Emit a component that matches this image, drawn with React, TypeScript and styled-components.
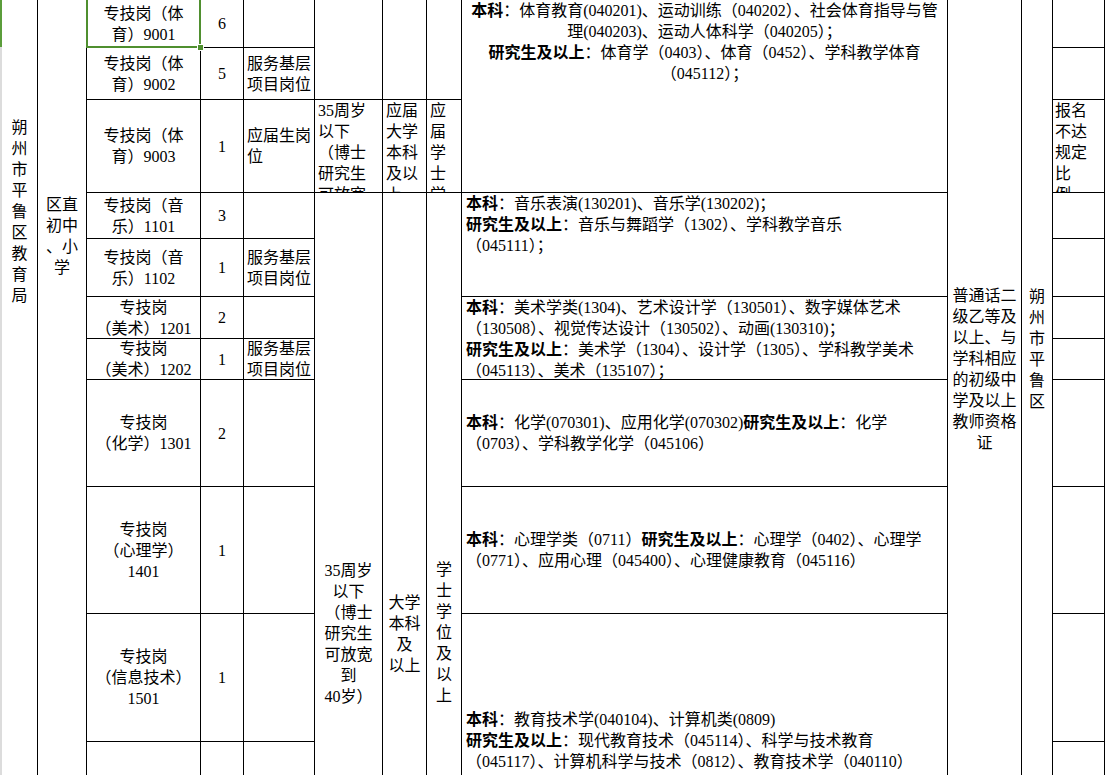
import styled, { createGlobalStyle } from "styled-components"

const GlobalStyle = createGlobalStyle`
  html, body {
    margin: 0;
    padding: 0;
    background: #fff;
    overflow: hidden;
  }
  body {
    font-family: "Liberation Serif", "Noto Sans CJK SC", serif;
    font-size: 16px;
    color: #000;
  }
`

const Page = styled.div`
  display: flex;
  align-items: flex-start;
  width: 1108px;
  height: 775px;
  overflow: hidden;
  background: #fff;
`

// right edge of the row headers, green where the selected row is
const RowHeaderEdge = styled.div`
  flex: 0 0 2px;
  align-self: stretch;
  background: linear-gradient(#5b9d3b 0 47px, #dcdcdc 47px);
`

const Sheet = styled.div`
  display: grid;
  grid-template-columns: 35px 48px 113px 42px 70px 67px 43px 34px 485px 73px 30px 51px;
  grid-template-rows: 47px 51px 92px 45px 57px 41px 40px 106px 126px 127px 200px;
  gap: 1px;
  padding-right: 1px;
  background: #000;
`

type CellProps = {
  $c: string
  $r: string
  $align?: "left" | "center"
  $valign?: "top" | "center"
  $pt?: number
  $pl?: number
}

const Cell = styled.div<CellProps>`
  grid-column: ${(p) => p.$c};
  grid-row: ${(p) => p.$r};
  display: flex;
  flex-direction: column;
  justify-content: ${(p) => (p.$valign === "top" ? "flex-start" : "center")};
  padding: ${(p) => p.$pt ?? 0}px 1px 0 ${(p) => p.$pl ?? 1}px;
  background: #fff;
  text-align: ${(p) => p.$align ?? "center"};
  line-height: 21px;
  white-space: nowrap;
  overflow: hidden;
`

const Selection = styled.div`
  grid-column: 3;
  grid-row: 1;
  margin: -2px -1px -1px -1px;
  border: 2px solid #4f8f2f;
  position: relative;
  z-index: 2;
  pointer-events: none;

  &::after {
    content: "";
    position: absolute;
    right: -5px;
    bottom: -5px;
    width: 5px;
    height: 5px;
    background: #4f8f2f;
    border: 1px solid #fff;
  }
`

const B = styled.b`
  font-weight: 700;
`

const stack = (text: string) =>
  text.split("").map((ch, i) => (
    <span key={i}>
      {ch}
      <br />
    </span>
  ))

const jobs = [
  ["专技岗（体", "育）9001", "6"],
  ["专技岗（体", "育）9002", "5"],
  ["专技岗（体", "育）9003", "1"],
  ["专技岗（音", "乐）1101", "3"],
  ["专技岗（音", "乐）1102", "1"],
  ["专技岗", "（美术）1201", "2"],
  ["专技岗", "（美术）1202", "1"],
  ["专技岗", "（化学）1301", "2"],
  ["专技岗", "（心理学）", "1401", "1"],
  ["专技岗", "（信息技术）", "1501", "1"],
]

const postType: Record<number, string[]> = {
  2: ["服务基层", "项目岗位"],
  3: ["应届生岗", "位"],
  5: ["服务基层", "项目岗位"],
  7: ["服务基层", "项目岗位"],
}

export default function App() {
  return (
    <Page>
      <GlobalStyle />
      <RowHeaderEdge />
      <Sheet>
        <Cell $c="1" $r="1 / 12" $valign="top" $pt={117}>
          <div>{stack("朔州市平鲁区教育局")}</div>
        </Cell>
        <Cell $c="2" $r="1 / 12" $valign="top" $pt={194}>
          <div>
            区直
            <br />
            初中
            <br />
            、小
            <br />学
          </div>
        </Cell>

        {jobs.map((job, i) => {
          const lines = job.slice(0, -1)
          return (
            <Cell key={"job" + i} $c="3" $r={String(i + 1)}>
              <div>
                {lines.map((l, j) => (
                  <span key={j}>
                    {l}
                    <br />
                  </span>
                ))}
              </div>
            </Cell>
          )
        })}
        <Cell $c="3" $r="11" />

        {jobs.map((job, i) => (
          <Cell key={"num" + i} $c="4" $r={String(i + 1)}>
            {job[job.length - 1]}
          </Cell>
        ))}
        <Cell $c="4" $r="11" />

        {Array.from({ length: 11 }, (_, i) => i + 1).map((r) => (
          <Cell key={"type" + r} $c="5" $r={String(r)} $align="left" $pl={3}>
            {postType[r] && (
              <div>
                {postType[r][0]}
                <br />
                {postType[r][1]}
              </div>
            )}
          </Cell>
        ))}

        <Cell $c="6" $r="1 / 3" />
        <Cell $c="7" $r="1 / 3" />
        <Cell $c="8" $r="1 / 3" />
        <Cell $c="6" $r="3" $align="left" $valign="top" $pl={3}>
          <div>
            35周岁
            <br />
            以下
            <br />
            （博士
            <br />
            研究生
            <br />
            可放宽
          </div>
        </Cell>
        <Cell $c="7" $r="3" $align="left" $valign="top" $pl={3}>
          <div>
            应届
            <br />
            大学
            <br />
            本科
            <br />
            及以
            <br />上
          </div>
        </Cell>
        <Cell $c="8" $r="3" $align="left" $valign="top" $pl={3}>
          <div>{stack("应届学士学位")}</div>
        </Cell>
        <Cell $c="6" $r="4 / 12" $valign="top" $pt={367}>
          <div>
            35周岁
            <br />
            以下
            <br />
            （博士
            <br />
            研究生
            <br />
            可放宽
            <br />
            到
            <br />
            40岁）
          </div>
        </Cell>
        <Cell $c="7" $r="4 / 12" $valign="top" $pt={399}>
          <div>
            大学
            <br />
            本科
            <br />
            及
            <br />
            以上
          </div>
        </Cell>
        <Cell $c="8" $r="4 / 12" $valign="top" $pt={366}>
          <div>{stack("学士学位及以上")}</div>
        </Cell>

        <Cell $c="9" $r="1 / 4" $valign="top">
          <div>
            <B>本科</B>：体育教育(040201)、运动训练（040202）、社会体育指导与管
            <br />
            理(040203)、运动人体科学（040205）；
            <br />
            <B>研究生及以上</B>：体育学（0403）、体育（0452）、学科教学体育
            <br />
            （045112）；
          </div>
        </Cell>
        <Cell $c="9" $r="4 / 6" $align="left" $valign="top" $pl={4}>
          <div>
            <B>本科</B>：音乐表演(130201)、音乐学(130202)；
            <br />
            <B>研究生及以上</B>：音乐与舞蹈学（1302）、学科教学音乐
            <br />
            （045111）；
          </div>
        </Cell>
        <Cell $c="9" $r="6 / 8" $align="left" $valign="top" $pl={4}>
          <div>
            <B>本科</B>：美术学类(1304)、艺术设计学（130501）、数字媒体艺术
            <br />
            （130508）、视觉传达设计（130502）、动画(130310)；
            <br />
            <B>研究生及以上</B>：美术学（1304）、设计学（1305）、学科教学美术
            <br />
            （045113）、美术（135107）；
          </div>
        </Cell>
        <Cell $c="9" $r="8" $align="left" $pl={4}>
          <div>
            <B>本科</B>：化学(070301)、应用化学(070302)<B>研究生及以上</B>：化学
            <br />
            （0703）、学科教学化学（045106）
          </div>
        </Cell>
        <Cell $c="9" $r="9" $align="left" $pl={4}>
          <div>
            <B>本科</B>：心理学类（0711）<B>研究生及以上</B>：心理学（0402）、心理学
            <br />
            （0771）、应用心理（045400）、心理健康教育（045116）
          </div>
        </Cell>
        <Cell $c="9" $r="10 / 12" $align="left" $valign="top" $pt={95} $pl={4}>
          <div>
            <B>本科</B>：教育技术学(040104)、计算机类(0809)
            <br />
            <B>研究生及以上</B>：现代教育技术（045114）、科学与技术教育
            <br />
            （045117）、计算机科学与技术（0812）、教育技术学（040110）
          </div>
        </Cell>

        <Cell $c="10" $r="1 / 12" $valign="top" $pt={285}>
          <div>
            普通话二
            <br />
            级乙等及
            <br />
            以上、与
            <br />
            学科相应
            <br />
            的初级中
            <br />
            学及以上
            <br />
            教师资格
            <br />证
          </div>
        </Cell>
        <Cell $c="11" $r="1 / 12" $valign="top" $pt={286}>
          <div>{stack("朔州市平鲁区")}</div>
        </Cell>

        {Array.from({ length: 11 }, (_, i) => i + 1).map((r) => (
          <Cell key={"note" + r} $c="12" $r={String(r)} $align="left" $valign="top" $pl={2}>
            {r === 3 && (
              <div>
                报名
                <br />
                不达
                <br />
                规定
                <br />
                比
                <br />例
              </div>
            )}
          </Cell>
        ))}

        <Selection />
      </Sheet>
    </Page>
  )
}
